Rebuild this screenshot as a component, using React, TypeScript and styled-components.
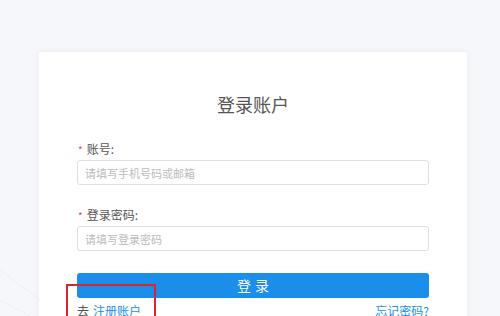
import styled, { createGlobalStyle } from 'styled-components'
import * as React from 'react'

const GlobalStyle = createGlobalStyle`
  html, body {
    margin: 0;
    padding: 0;
    background: #f5f7fa;
    font-family: "Noto Sans CJK SC", "Noto Sans", sans-serif;
    overflow: hidden;
  }
`

const Page = styled.div`
  position: relative;
  width: 500px;
  height: 316px;
  overflow: hidden;
  background: #f5f7fa;
  padding-top: 52px;
  box-sizing: border-box;
`

const Card = styled.div`
  width: 428px;
  margin-left: 39px;
  background: #fff;
  border-radius: 3px;
  box-shadow: 0 0 8px rgba(0, 0, 0, 0.05);
  padding: 38px 38px 40px;
  box-sizing: border-box;
`

const Title = styled.h1`
  margin: 0 0 23px;
  text-align: center;
  font-size: 18px;
  font-weight: 400;
  color: #555;
  line-height: 28px;
`

const Field = styled.div`
  margin-bottom: 22px;
`

const Label = styled.div`
  font-size: 12px;
  line-height: 16px;
  color: #555;
  margin-bottom: 2px;
  padding-left: 1px;
`

const Star = styled.span`
  color: #e34b4b;
  margin-right: 4px;
  font-size: 10px;
`

const Input = styled.input`
  display: block;
  width: 100%;
  height: 25px;
  box-sizing: border-box;
  border: 1px solid #dcdfe6;
  border-radius: 3px;
  padding: 0 7px;
  font-family: inherit;
  font-size: 11px;
  color: #555;
  outline: none;
  &::placeholder {
    color: #bbb;
  }
`

const Submit = styled.button`
  display: block;
  width: 100%;
  height: 25px;
  margin-top: 16px;
  border: none;
  border-radius: 3px;
  background: #1a8ee8;
  color: #fff;
  font-family: inherit;
  font-size: 14px;
  letter-spacing: 4px;
  padding: 0 0 0 4px;
  line-height: 25px;
`

const Links = styled.div`
  display: flex;
  justify-content: space-between;
  margin-top: 4px;
  font-size: 12px;
  line-height: 18px;
`

const Plain = styled.span`
  color: #555;
  margin-right: 4px;
`

const Link = styled.a`
  color: #1a8ee8;
  text-decoration: none;
`

const Marker = styled.div`
  position: absolute;
  left: 66px;
  top: 284px;
  width: 90px;
  height: 40px;
  border: 2px solid #d9262c;
  box-sizing: border-box;
`

const Deco = styled.svg`
  position: absolute;
  left: 0;
  top: 200px;
`

export default function App() {
  return (
    <>
      <GlobalStyle />
      <Page>
        <Deco width="40" height="116" viewBox="0 0 40 116">
          <path d="M0 70 L40 100" stroke="#edf0f4" strokeWidth="1" fill="none" />
          <path d="M0 100 L30 116" stroke="#edf0f4" strokeWidth="1" fill="none" />
        </Deco>
        <Card>
          <Title>登录账户</Title>
          <Field>
            <Label>
              <Star>*</Star>账号:
            </Label>
            <Input placeholder="请填写手机号码或邮箱" />
          </Field>
          <Field>
            <Label>
              <Star>*</Star>登录密码:
            </Label>
            <Input type="password" placeholder="请填写登录密码" />
          </Field>
          <Submit>登录</Submit>
          <Links>
            <span>
              <Plain>去</Plain>
              <Link href="#">注册账户</Link>
            </span>
            <Link href="#">忘记密码?</Link>
          </Links>
        </Card>
        <Marker />
      </Page>
    </>
  )
}
